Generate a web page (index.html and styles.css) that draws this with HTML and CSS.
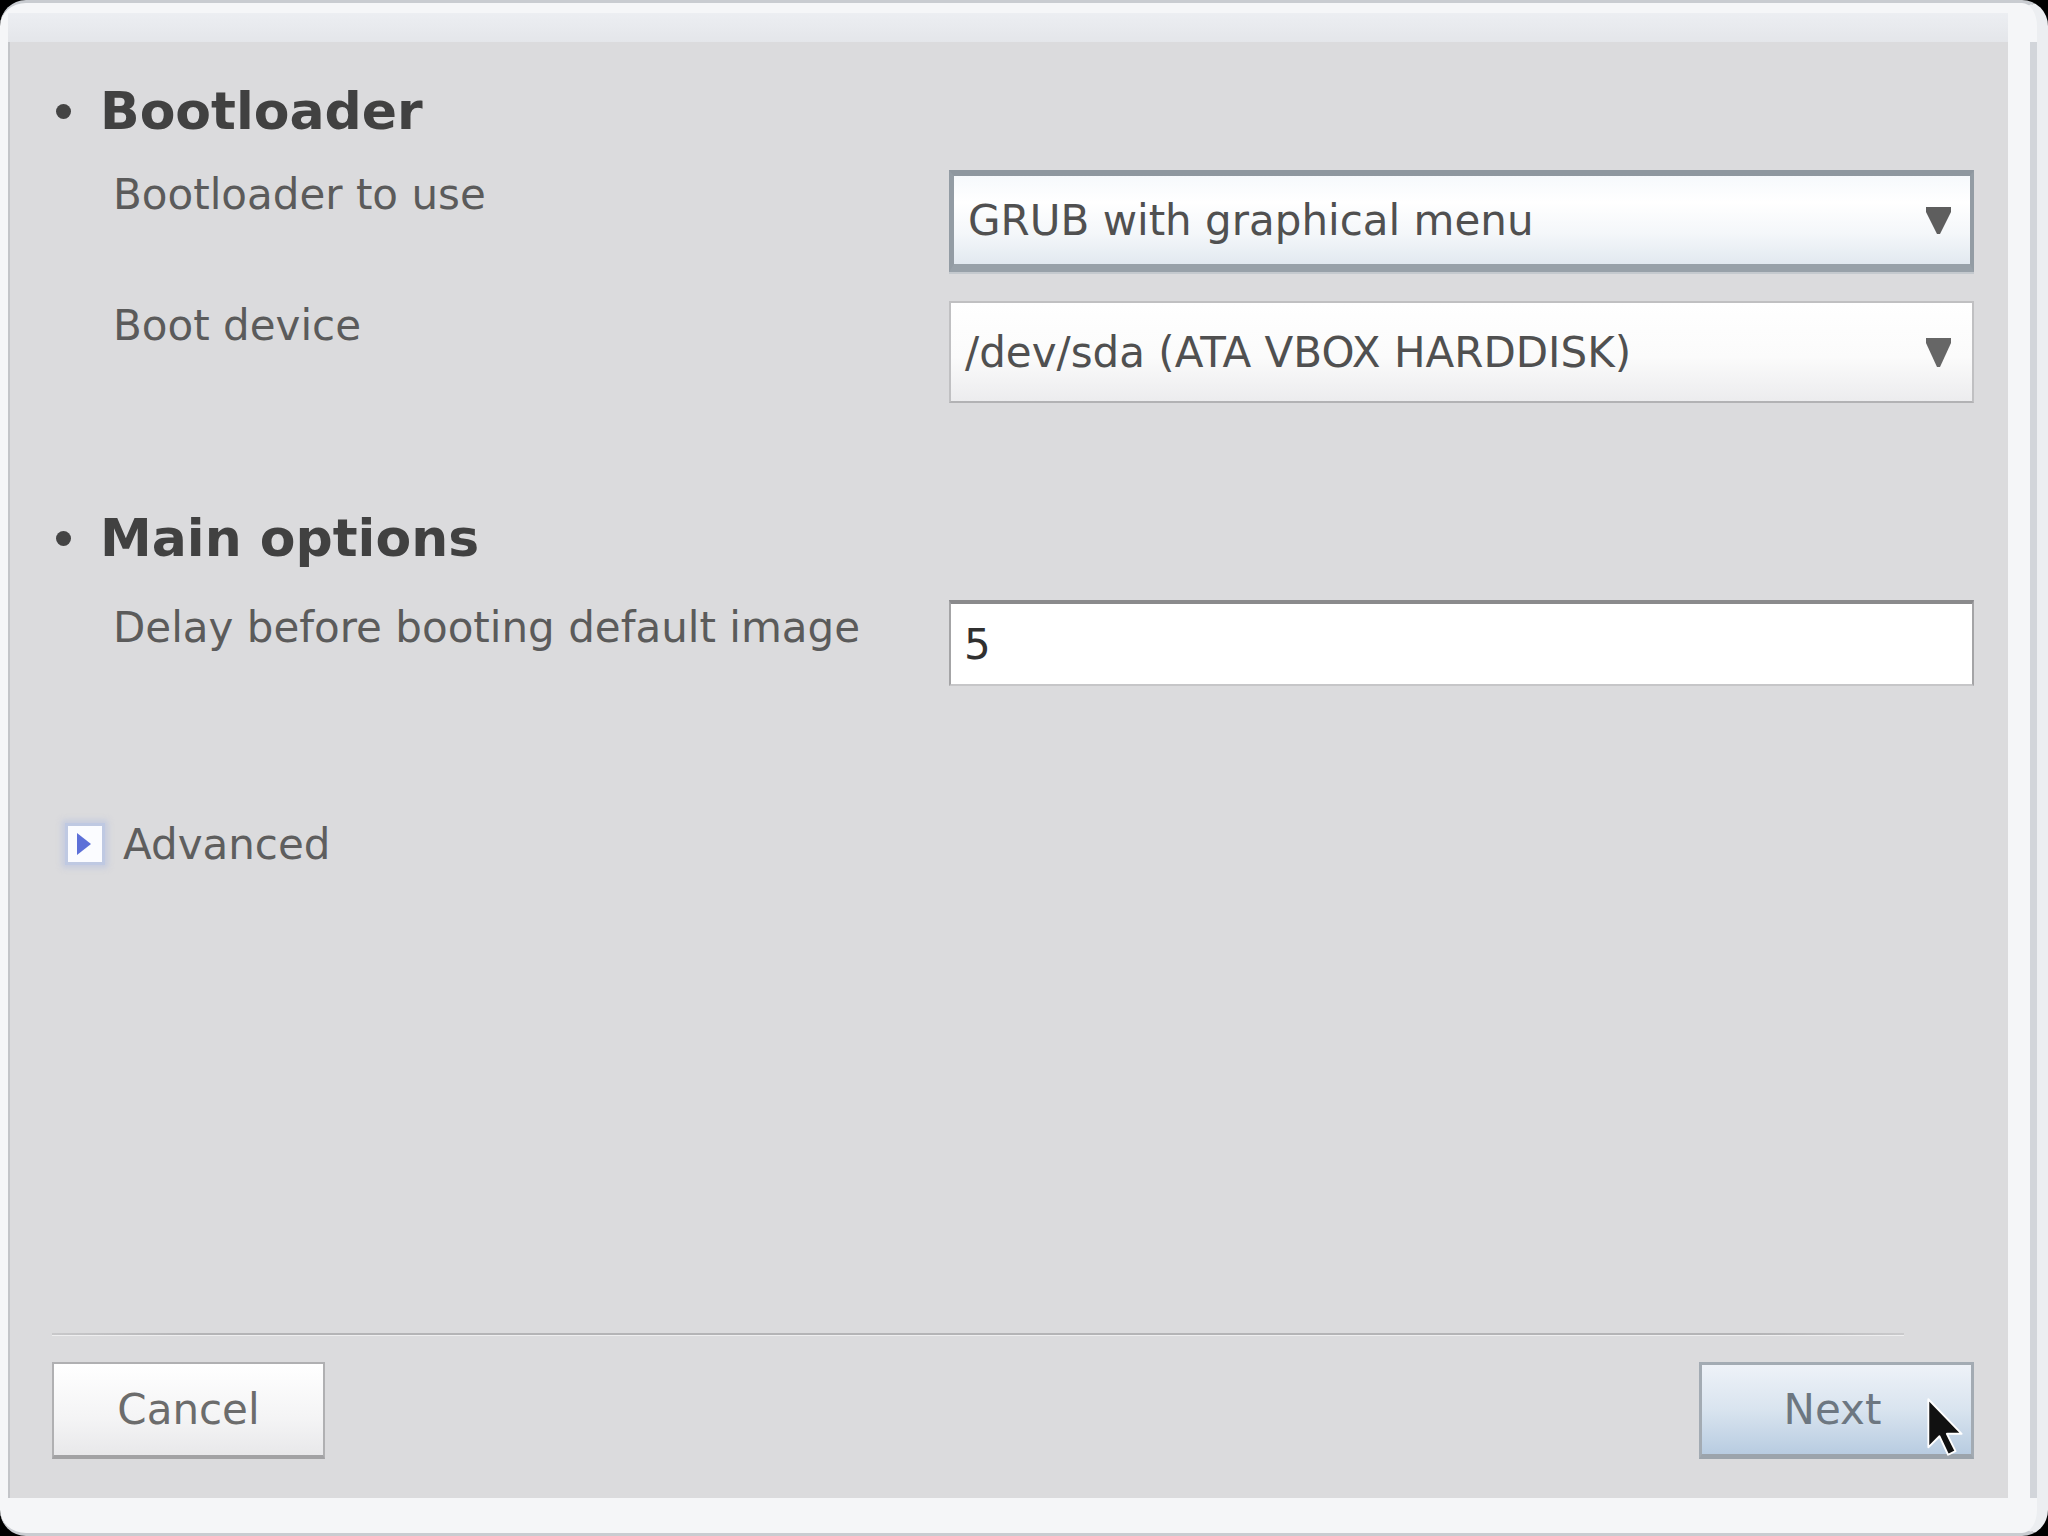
FILE: index.html
```html
<!DOCTYPE html>
<html>
<head>
<meta charset="utf-8">
<link rel="stylesheet" href="styles.css">
</head>
<body>
<div class="window">
  <div class="titlebar"></div>
  <div class="frame">
    <div class="client">
      <div class="heading"><span class="bullet"></span><span>Bootloader</span></div>
      <div class="row first">
        <div class="label">Bootloader to use</div>
        <div class="combo focused"><span class="combo-text">GRUB with graphical menu</span>
          <svg class="arrow" width="25" height="27" viewBox="0 0 25 27"><polygon points="0,0 25,0 25,5 14,27 11,27 0,5" fill="#5e5e5e"/></svg>
        </div>
      </div>
      <div class="row second">
        <div class="label">Boot device</div>
        <div class="combo"><span class="combo-text">/dev/sda (ATA VBOX HARDDISK)</span>
          <svg class="arrow" width="25" height="29" viewBox="0 0 25 29"><polygon points="0,0 25,0 25,5 14,29 11,29 0,5" fill="#666"/></svg>
        </div>
      </div>
      <div class="heading second-heading"><span class="bullet"></span><span>Main options</span></div>
      <div class="row third">
        <div class="label shifted">Delay before booting default image</div>
        <div class="entry">5</div>
      </div>
      <div class="advanced">
        <span class="expander"><svg width="14" height="22" viewBox="0 0 14 22"><polygon points="0,0 14,11 0,22" fill="#5d70d8"/></svg></span>
        <span class="adv-text">Advanced</span>
      </div>
      <div class="spacer"></div>
      <div class="separator"></div>
      <div class="buttons">
        <div class="btn cancel">Cancel</div>
        <div class="btn next">Next</div>
      </div>
    </div>
  </div>
</div>
<svg class="cursor" width="36" height="58" viewBox="0 0 29 47"><polygon points="1,1 1,40 10,31 17,46 23,43 16,29 28,29" fill="#111" stroke="#fff" stroke-width="1.5" stroke-linejoin="round"/></svg>
</body>
</html>
```
FILE: styles.css
```css
html, body {
  margin: 0;
  padding: 0;
}
body {
  width: 2048px;
  height: 1536px;
  overflow: hidden;
  background: #000;
  font-family: "DejaVu Sans", "Liberation Sans", sans-serif;
}
.window {
  width: 2048px;
  height: 1536px;
  box-sizing: border-box;
  border-radius: 26px;
  background: #f5f6f8;
  border-top: 3px solid #c9ccd1;
  border-right: 11px solid #eceef1;
  border-bottom: 3px solid #c9ccd1;
  padding: 10px 0 35px 8px;
  display: flex;
  flex-direction: column;
}
.titlebar {
  height: 29px;
  margin-right: 29px;
  background: linear-gradient(#eceef2, #e4e6ea);
}
.frame {
  flex: 1;
  display: flex;
  border-right: 7px solid #d2d5da;
  padding-right: 22px;
}
.client {
  flex: 1;
  background: #dbdbdd;
  border-left: 2px solid #c3c5c9;
  display: flex;
  flex-direction: column;
  padding: 38px 34px 39px 42px;
}
.heading {
  display: flex;
  align-items: center;
  height: 62px;
  font-weight: bold;
  font-size: 52px;
  line-height: 62px;
  color: #414141;
}
.bullet {
  width: 15px;
  height: 15px;
  border-radius: 50%;
  background: #444;
  margin-left: 4px;
  margin-right: 29px;
}
.second-heading {
  margin-top: 104px;
}
.row {
  display: grid;
  grid-template-columns: 897px 1fr;
}
.row.first { margin-top: 28px; }
.row.second { margin-top: 29px; }
.row.third { margin-top: 31px; }
.label {
  padding-left: 61px;
  font-size: 42px;
  line-height: 50px;
  color: #5b5b5b;
}
.label.shifted {
  padding-top: 3px;
}
.combo {
  height: 102px;
  box-sizing: border-box;
  display: flex;
  align-items: center;
  justify-content: space-between;
  padding: 0 21px 0 14px;
  border: 2px solid #c0c0c2;
  border-bottom-color: #b2b2b4;
  background: linear-gradient(#ffffff 0%, #fbfbfb 55%, #ececee 100%);
  font-size: 42px;
  color: #505050;
}
.combo.focused {
  border-width: 6px 4px 8px 5px;
  border-color: #8e979f #939ca4 #98a1a9 #939ca4;
  background: linear-gradient(#f6f9fc 0%, #ffffff 30%, #f4f7fa 65%, #e2e9f0 100%);
  padding-right: 19px;
  box-shadow: 0 2px 0 #c4c9ce;
}
.arrow {
  display: block;
}
.entry {
  height: 86px;
  box-sizing: border-box;
  display: flex;
  align-items: center;
  padding: 0 13px;
  border: 2px solid #a4a4a6;
  border-top: 4px solid #8a8a8c;
  border-bottom: 2px solid #c6c6c8;
  background: #fff;
  font-size: 42px;
  color: #303030;
}
.advanced {
  display: flex;
  align-items: center;
  height: 40px;
  margin-top: 138px;
}
.expander {
  height: 36px;
  margin-left: 13px;
  background: #fbfcff;
  border: 3px solid #bfc9e2;
  box-shadow: 0 0 6px 3px rgba(170, 185, 225, 0.45);
  display: flex;
  align-items: center;
  padding-left: 9px;
  box-sizing: content-box;
  width: 25px;
}
.expander svg {
  display: block;
}
.adv-text {
  margin-left: 18px;
  font-size: 42px;
  color: #5e5e5e;
}
.spacer {
  flex: 1;
}
.separator {
  height: 2px;
  margin-right: 70px;
  background: linear-gradient(90deg, #c8c8ca 0%, #b4b4b6 8%, #b4b4b6 92%, #cacacc 100%);
  border-bottom: 1px solid #eeeeef;
  margin-bottom: 26px;
}
.buttons {
  display: flex;
  justify-content: space-between;
}
.btn {
  height: 97px;
  box-sizing: border-box;
  display: flex;
  align-items: center;
  justify-content: center;
  font-size: 42px;
}
.cancel {
  width: 273px;
  border: 2px solid #b0b0b2;
  border-bottom: 4px solid #a2a2a4;
  background: linear-gradient(#ffffff, #f4f4f5 60%, #e8e8ea);
  color: #6c6c6c;
}
.next {
  width: 275px;
  border: 3px solid #a3abb3;
  border-bottom: 5px solid #9ca4ac;
  background: linear-gradient(#eef2f8, #d9e4ef 50%, #b8cce1);
  color: #6d7781;
  padding-right: 8px;
}
.cursor {
  position: absolute;
  left: 1927px;
  top: 1398px;
}
```
